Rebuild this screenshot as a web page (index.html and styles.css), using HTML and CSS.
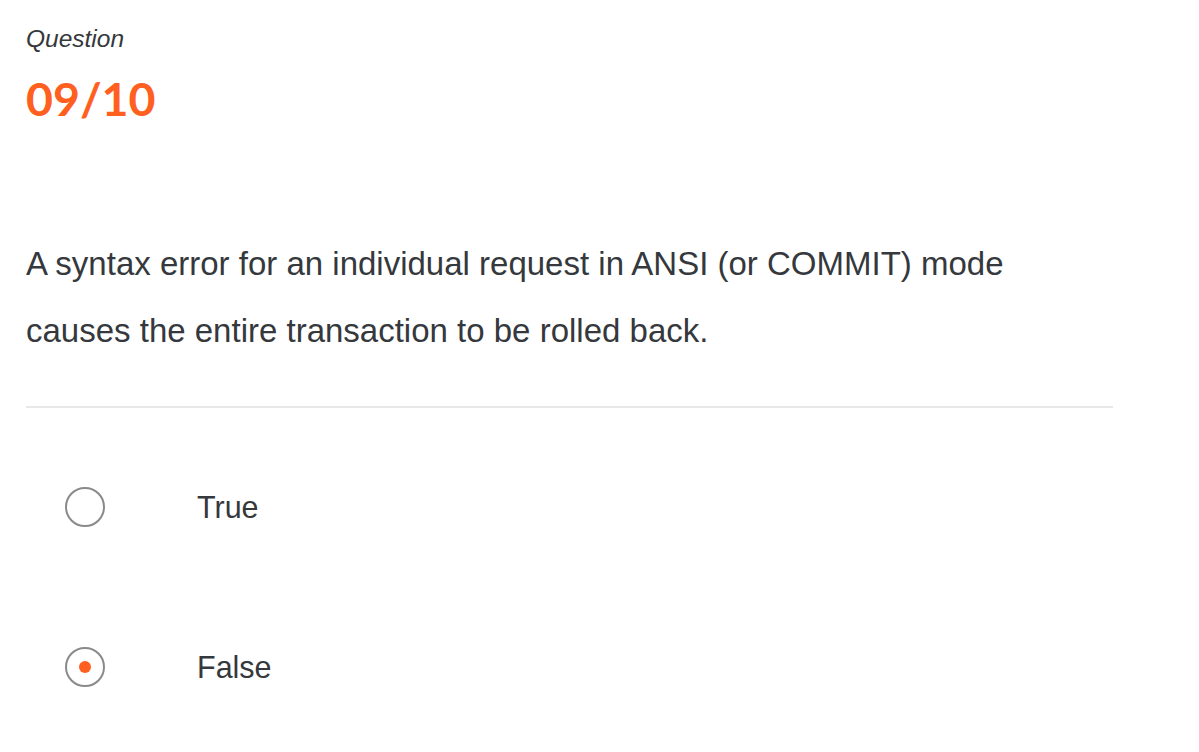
FILE: index.html
```html
<!DOCTYPE html>
<html lang="en">
<head>
<meta charset="utf-8">
<title>Question 09/10</title>
<link rel="stylesheet" href="styles.css">
</head>
<body>
<main class="quiz">
  <div class="label">Question</div>
  <div class="counter">09/10</div>
  <p class="prompt">A syntax error for an individual request in ANSI (or COMMIT) mode causes the entire transaction to be rolled back.</p>
  <hr class="divider">
  <div class="options">
    <label class="option">
      <span class="radio"></span>
      <span class="option-text">True</span>
    </label>
    <label class="option">
      <span class="radio checked"></span>
      <span class="option-text">False</span>
    </label>
  </div>
</main>
</body>
</html>
```

FILE: styles.css
```css
html, body {
  margin: 0;
  padding: 0;
  background: #ffffff;
}

body {
  font-family: "Liberation Sans", Arial, sans-serif;
  color: #35383c;
}

.quiz {
  display: flex;
  flex-direction: column;
  padding: 25px 0 0 26px;
  width: 1087px;
}

.label {
  font-style: italic;
  font-size: 24.5px;
  line-height: 28px;
  color: #35383c;
}

.counter {
  margin-top: 17px;
  font-family: Lato, "Liberation Sans", sans-serif;
  font-weight: 700;
  font-size: 46.5px;
  line-height: 56px;
  color: #ff5f1f;
}

.prompt {
  margin: 104px 0 0;
  font-size: 33px;
  line-height: 67px;
  width: 1040px;
}

.divider {
  margin: 42px 0 0;
  border: 0;
  height: 2px;
  background: #e8e8e8;
}

.options {
  display: flex;
  flex-direction: column;
  gap: 80px;
  margin-top: 59px;
}

.option {
  display: flex;
  align-items: center;
  height: 80px;
  padding-left: 39px;
  gap: 92px;
}

.radio {
  width: 40px;
  height: 40px;
  box-sizing: border-box;
  border: 2px solid #8a8a8a;
  border-radius: 50%;
  display: flex;
  align-items: center;
  justify-content: center;
  flex-shrink: 0;
}

.radio.checked::after {
  content: "";
  width: 12px;
  height: 12px;
  border-radius: 50%;
  background: #ff5f1f;
}

.option-text {
  font-size: 30.5px;
  line-height: 36px;
  color: #35383c;
}
```
